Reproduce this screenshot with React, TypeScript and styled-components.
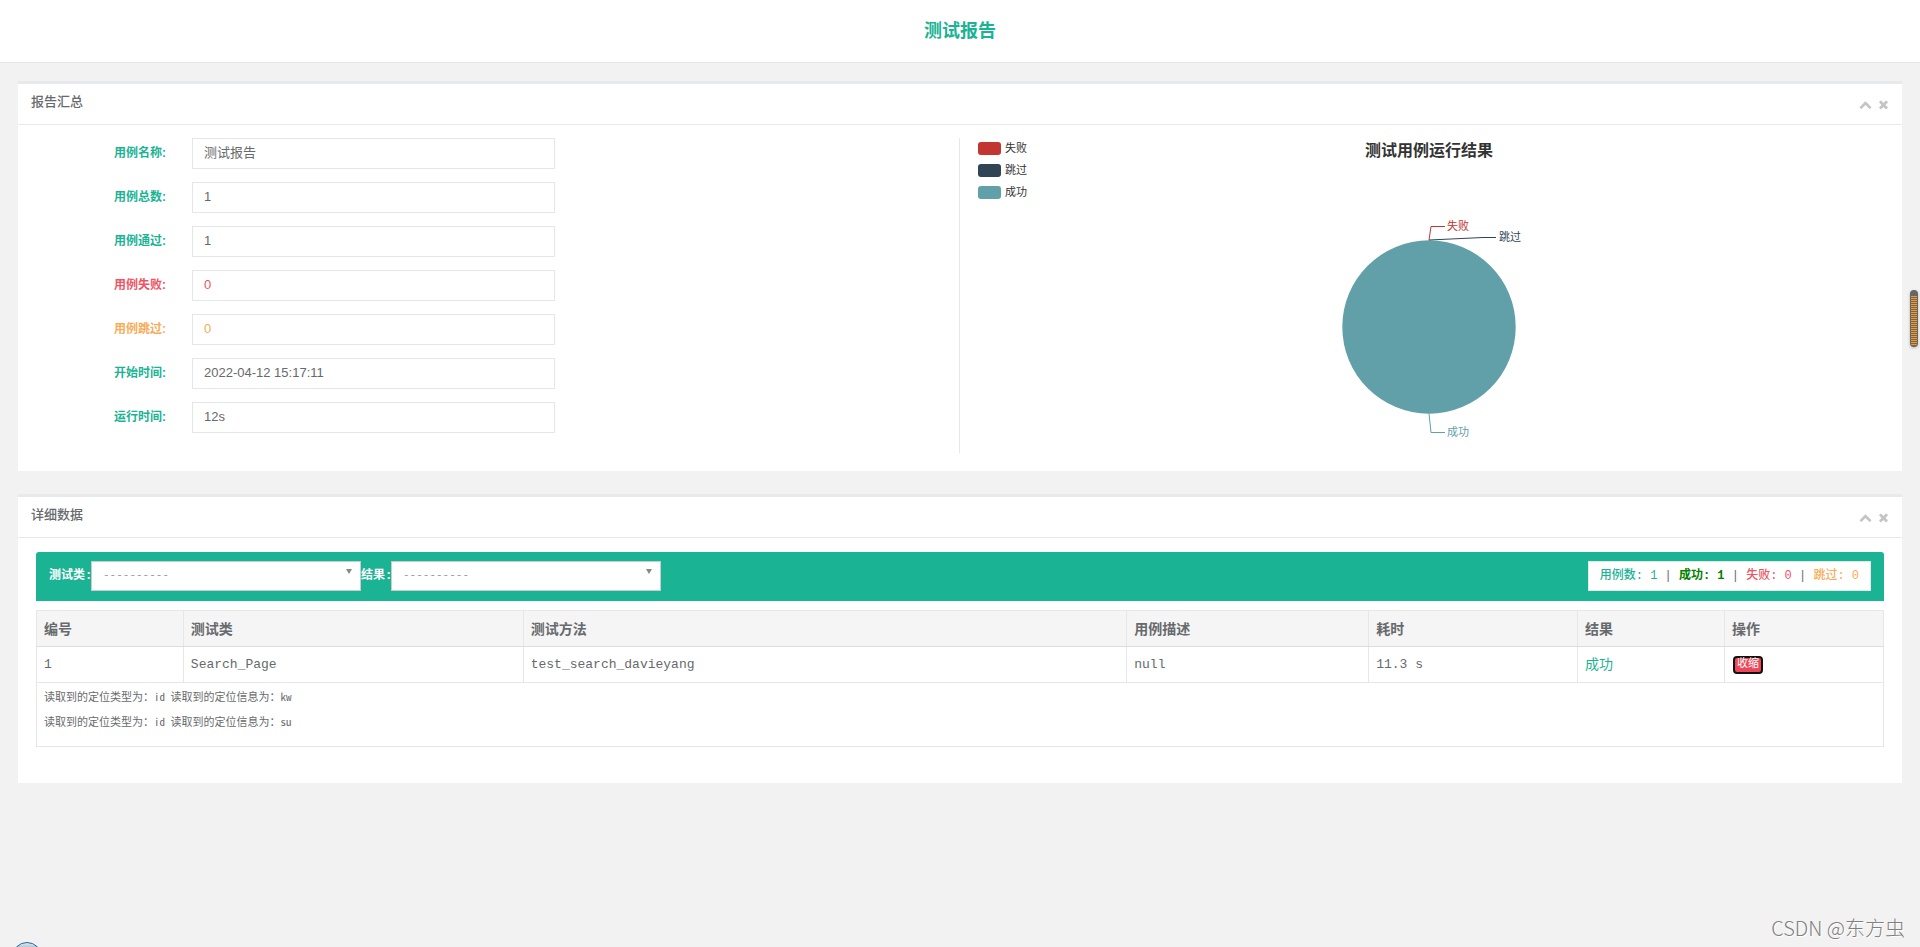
import React from "react";
import styled, { createGlobalStyle } from "styled-components";

const GREEN = "#1ab394";
const RED = "#ed5565";
const ORANGE = "#f8ac59";
const TEXT = "#676a6c";
const LINE = "#e7e7e7";
const SANS = '"Liberation Sans", "Noto Sans CJK SC", sans-serif';
const MONO = '"Liberation Mono", "Noto Sans CJK SC", monospace';

const GlobalStyle = createGlobalStyle`
  * { box-sizing: border-box; }
  body {
    margin: 0;
    background: #f2f2f2;
    color: ${TEXT};
    font: 13px/18px ${SANS};
  }
  input, select, button { font: inherit; color: inherit; }
`;

const Page = styled.div`
  position: relative;
  min-height: 100vh;
  overflow: hidden;
  display: flex;
  flex-direction: column;
`;

const Header = styled.header`
  background: #fff;
  border-bottom: 1px solid #e5e6e7;
  padding: 19px 0;
`;

const PageTitle = styled.h1`
  margin: 0;
  text-align: center;
  font-size: 18px;
  line-height: 24px;
  color: ${GREEN};
`;

const Main = styled.main`
  padding: 18px;
  display: flex;
  flex-direction: column;
  gap: 23px;
`;

const Panel = styled.section`
  background: #fff;
  border-top: 3px solid #e7eaec;
`;

const PanelHead = styled.div`
  display: flex;
  justify-content: space-between;
  height: 41px;
  padding: 9px 12px 0 13px;
  border-bottom: 1px solid #e7eaec;
`;

const PanelTitle = styled.h2`
  margin: 0;
  font-size: 13px;
  line-height: 18px;
  font-weight: 500;
`;

const Tools = styled.div`
  display: flex;
  align-items: center;
  gap: 5px;
  padding-top: 3px;
  height: 20px;
`;

const ToolButton = styled.button`
  display: flex;
  border: 0;
  padding: 0;
  background: none;
  svg { width: 13px; height: 13px; fill: #c4c4c4; }
`;

const Summary = styled.div`
  display: grid;
  grid-template-columns: 1fr 1fr;
  padding: 13px 0 18px;
`;

const Fields = styled.form`
  display: flex;
  flex-direction: column;
  gap: 13px;
  border-right: 1px solid ${LINE};
  min-height: 315px;
`;

const Field = styled.div<{ $tone: string }>`
  display: grid;
  grid-template-columns: 148px 363px;
  column-gap: 26px;
  height: 31px;
  color: ${(p) => (p.$tone === TEXT ? GREEN : p.$tone)};
  label {
    text-align: right;
    font-size: 12px;
    line-height: 30px;
    font-weight: bold;
  }
  input {
    width: 100%;
    border: 1px solid #e5e6e7;
    padding: 0 11px 2px;
    background: #fff;
    color: ${(p) => p.$tone};
    outline: none;
  }
`;

const Chart = styled.div`
  display: flex;
  justify-content: space-between;
  padding-left: 18px;
`;

const Legend = styled.ul`
  list-style: none;
  margin: 0;
  padding: 2px 0 0;
  width: 100px;
  display: flex;
  flex-direction: column;
  gap: 6px;
`;

const LegendItem = styled.li<{ $color: string }>`
  display: flex;
  gap: 4px;
  font-size: 11px;
  line-height: 16px;
  color: #333;
  &::before {
    content: "";
    width: 23px;
    height: 13px;
    margin-top: 2px;
    border-radius: 3px;
    background: ${(p) => p.$color};
  }
`;

const PieSvg = styled.svg`
  width: 300px;
  height: 315px;
  font-family: ${SANS};
`;

const LegendBalance = styled.div`
  width: 122px;
`;

const Detail = styled.div`
  padding: 14px 18px 36px;
  font-family: ${MONO};
`;

const Toolbar = styled.div`
  display: flex;
  justify-content: space-between;
  padding: 9px 13px 10px;
  border-radius: 3px 3px 0 0;
  background: ${GREEN};
  margin-bottom: 9px;
`;

const Filters = styled.div`
  display: flex;
`;

const FilterLabel = styled.label<{ $width: number }>`
  width: ${(p) => p.$width}px;
  white-space: nowrap;
  font-size: 12px;
  line-height: 30px;
  font-weight: bold;
  color: #fff;
`;

const SelectBox = styled.div`
  position: relative;
  width: 270px;
  height: 30px;
  select {
    appearance: none;
    width: 100%;
    height: 30px;
    padding: 0 11px 2px;
    border: 1px solid #ccc;
    border-radius: 0;
    background: #fff;
    color: #999;
    font-size: 11px;
  }
  svg {
    position: absolute;
    right: 9px;
    top: 8px;
    width: 6px;
    height: 5px;
    fill: #888;
    pointer-events: none;
  }
`;

const Stats = styled.div`
  height: 30px;
  padding: 0 11px;
  border: 1px solid ${LINE};
  background: #fff;
  font-size: 12px;
  line-height: 28px;
  white-space: pre;
`;

const Stat = styled.span<{ $color: string; $bold?: boolean }>`
  color: ${(p) => p.$color};
  font-weight: ${(p) => (p.$bold ? "bold" : "500")};
`;

const Table = styled.table`
  width: 100%;
  table-layout: fixed;
  border-collapse: collapse;
  border: 1px solid ${LINE};
  th, td {
    height: 36px;
    padding: 0 7px;
    border: 1px solid ${LINE};
    text-align: left;
    font-size: 13px;
    line-height: 18px;
  }
  th {
    padding-top: 2px;
    background: #f5f5f6;
    border-bottom: 1px solid #ddd;
    font-size: 14px;
  }
`;

const Result = styled.td`
  && { font-size: 14px; }
  color: ${GREEN};
`;

const LogCell = styled.td`
  && { padding: 5px 7px 8px; }
`;

const LogLine = styled.p`
  margin: 0 0 9px;
  font-family: "Noto Sans CJK SC", sans-serif;
  font-feature-settings: "hwid";
  font-size: 11px;
  line-height: 16px;
`;

const CollapseButton = styled.button`
  display: block;
  margin-left: 1px;
  width: 30px;
  height: 18px;
  padding: 0;
  border: 2px solid #111;
  border-radius: 4px;
  background: #ec4758;
  color: #fff;
  font-size: 11px;
  line-height: 13px;
`;

const ScrollGauge = styled.div`
  position: absolute;
  right: 2px;
  top: 290px;
  width: 8px;
  height: 57px;
  padding: 6px 1px 1px;
  border-radius: 4px;
  background: #666;
  box-shadow: 0 1px 3px rgba(0, 0, 0, 0.25);
  &::before {
    content: "";
    display: block;
    height: 50px;
    border-radius: 0 0 3px 3px;
    background: repeating-linear-gradient(#fb9a1c 0 1px, #666 1px 2px);
  }
`;

const Bubble = styled.div`
  position: absolute;
  left: 12px;
  bottom: -25px;
  width: 30px;
  height: 30px;
  border: 1px solid #2a6496;
  border-radius: 50%;
  background: linear-gradient(#dfe9f1, #9db8cc 6px);
`;

const Watermark = styled.div`
  position: absolute;
  right: 15px;
  bottom: 6px;
  font-family: "Noto Sans CJK SC", sans-serif;
  font-size: 20px;
  line-height: 26px;
  color: #808080;
  text-shadow: 1px 1px 0 #fff;
  font-weight: 300;
`;

const FIELDS = [
  { id: "name", label: "用例名称:", value: "测试报告", tone: TEXT },
  { id: "total", label: "用例总数:", value: "1", tone: TEXT },
  { id: "pass", label: "用例通过:", value: "1", tone: TEXT },
  { id: "fail", label: "用例失败:", value: "0", tone: RED },
  { id: "skip", label: "用例跳过:", value: "0", tone: ORANGE },
  { id: "start", label: "开始时间:", value: "2022-04-12 15:17:11", tone: TEXT },
  { id: "duration", label: "运行时间:", value: "12s", tone: TEXT },
];

const COLUMNS = [
  { name: "编号", width: "7.95%" },
  { name: "测试类", width: "18.4%" },
  { name: "测试方法", width: "32.68%" },
  { name: "用例描述", width: "13.1%" },
  { name: "耗时", width: "11.31%" },
  { name: "结果", width: "7.95%" },
  { name: "操作", width: "8.61%" },
];

const CHEVRON =
  "M1683 1331l-166 165q-19 19-45 19t-45-19l-531-531-531 531q-19 19-45 19t-45-19l-166-165q-19-19-19-45.5t19-45.5l742-741q19-19 45-19t45 19l742 741q19 19 19 45.5t-19 45.5z";
const TIMES =
  "M1490 1322q0 40-28 68l-136 136q-28 28-68 28t-68-28l-294-294-294 294q-28 28-68 28t-68-28l-136-136q-28-28-28-68t28-68l294-294-294-294q-28-28-28-68t28-68l136-136q28-28 68-28t68 28l294 294 294-294q28-28 68-28t68 28l136 136q28 28 28 68t-28 68l-294 294 294 294q28 28 28 68z";

function PanelHeader({ title }: { title: string }) {
  return (
    <PanelHead>
      <PanelTitle>{title}</PanelTitle>
      <Tools>
        <ToolButton type="button" aria-label="折叠">
          <svg viewBox="0 0 1792 1792"><path d={CHEVRON} /></svg>
        </ToolButton>
        <ToolButton type="button" aria-label="关闭">
          <svg viewBox="0 0 1792 1792"><path d={TIMES} /></svg>
        </ToolButton>
      </Tools>
    </PanelHead>
  );
}

function Filter({ id, label, width }: { id: string; label: string; width: number }) {
  return (
    <>
      <FilterLabel htmlFor={id} $width={width}>{label}</FilterLabel>
      <SelectBox>
        <select id={id}>
          <option>----------</option>
        </select>
        <svg viewBox="0 0 6 5"><path d="M0 0h6L3 5z" /></svg>
      </SelectBox>
    </>
  );
}

function Pie() {
  return (
    <PieSvg viewBox="0 0 300 315">
      <text x="150" y="18" textAnchor="middle" fontSize="16" fontWeight="bold" fill="#333">
        测试用例运行结果
      </text>
      <circle cx="150" cy="189" r="86.7" fill="#61a0a8" />
      <g fill="none">
        <path d="M150 102L152 88.5H166" stroke="#c23531" />
        <path d="M150 102L204 99.5H217" stroke="#2f4554" />
        <path d="M150 275.5L152 294.5H166" stroke="#61a0a8" />
      </g>
      <g fontSize="11">
        <text x="168" y="92" fill="#c23531">失败</text>
        <text x="220" y="103" fill="#2f4554">跳过</text>
        <text x="168" y="298" fill="#61a0a8">成功</text>
      </g>
    </PieSvg>
  );
}

export default function App() {
  return (
    <Page>
      <GlobalStyle />
      <Header>
        <PageTitle>测试报告</PageTitle>
      </Header>
      <Main>
        <Panel>
          <PanelHeader title="报告汇总" />
          <Summary>
            <Fields>
              {FIELDS.map((f) => (
                <Field key={f.id} $tone={f.tone}>
                  <label htmlFor={f.id}>{f.label}</label>
                  <input id={f.id} type="text" readOnly value={f.value} />
                </Field>
              ))}
            </Fields>
            <Chart>
              <Legend>
                <LegendItem $color="#c23531">失败</LegendItem>
                <LegendItem $color="#2f4554">跳过</LegendItem>
                <LegendItem $color="#61a0a8">成功</LegendItem>
              </Legend>
              <Pie />
              <LegendBalance />
            </Chart>
          </Summary>
        </Panel>
        <Panel>
          <PanelHeader title="详细数据" />
          <Detail>
            <Toolbar>
              <Filters>
                <Filter id="case-class" label="测试类:" width={42} />
                <Filter id="case-result" label="结果:" width={30} />
              </Filters>
              <Stats>
                <Stat $color={GREEN}>用例数: 1</Stat>
                {" | "}
                <Stat $color="#008000" $bold>成功: 1</Stat>
                {" | "}
                <Stat $color={RED}>失败: 0</Stat>
                {" | "}
                <Stat $color={ORANGE}>跳过: 0</Stat>
              </Stats>
            </Toolbar>
            <Table>
              <colgroup>
                {COLUMNS.map((c) => (
                  <col key={c.name} width={c.width} />
                ))}
              </colgroup>
              <thead>
                <tr>
                  {COLUMNS.map((c) => (
                    <th key={c.name}>{c.name}</th>
                  ))}
                </tr>
              </thead>
              <tbody>
                <tr>
                  <td>1</td>
                  <td>Search_Page</td>
                  <td>test_search_davieyang</td>
                  <td>null</td>
                  <td>11.3 s</td>
                  <Result>成功</Result>
                  <td>
                    <CollapseButton type="button">收缩</CollapseButton>
                  </td>
                </tr>
                <tr>
                  <LogCell colSpan={7}>
                    <LogLine>读取到的定位类型为：id 读取到的定位信息为：kw</LogLine>
                    <LogLine>读取到的定位类型为：id 读取到的定位信息为：su</LogLine>
                  </LogCell>
                </tr>
              </tbody>
            </Table>
          </Detail>
        </Panel>
      </Main>
      <ScrollGauge />
      <Bubble />
      <Watermark>CSDN @东方虫</Watermark>
    </Page>
  );
}
